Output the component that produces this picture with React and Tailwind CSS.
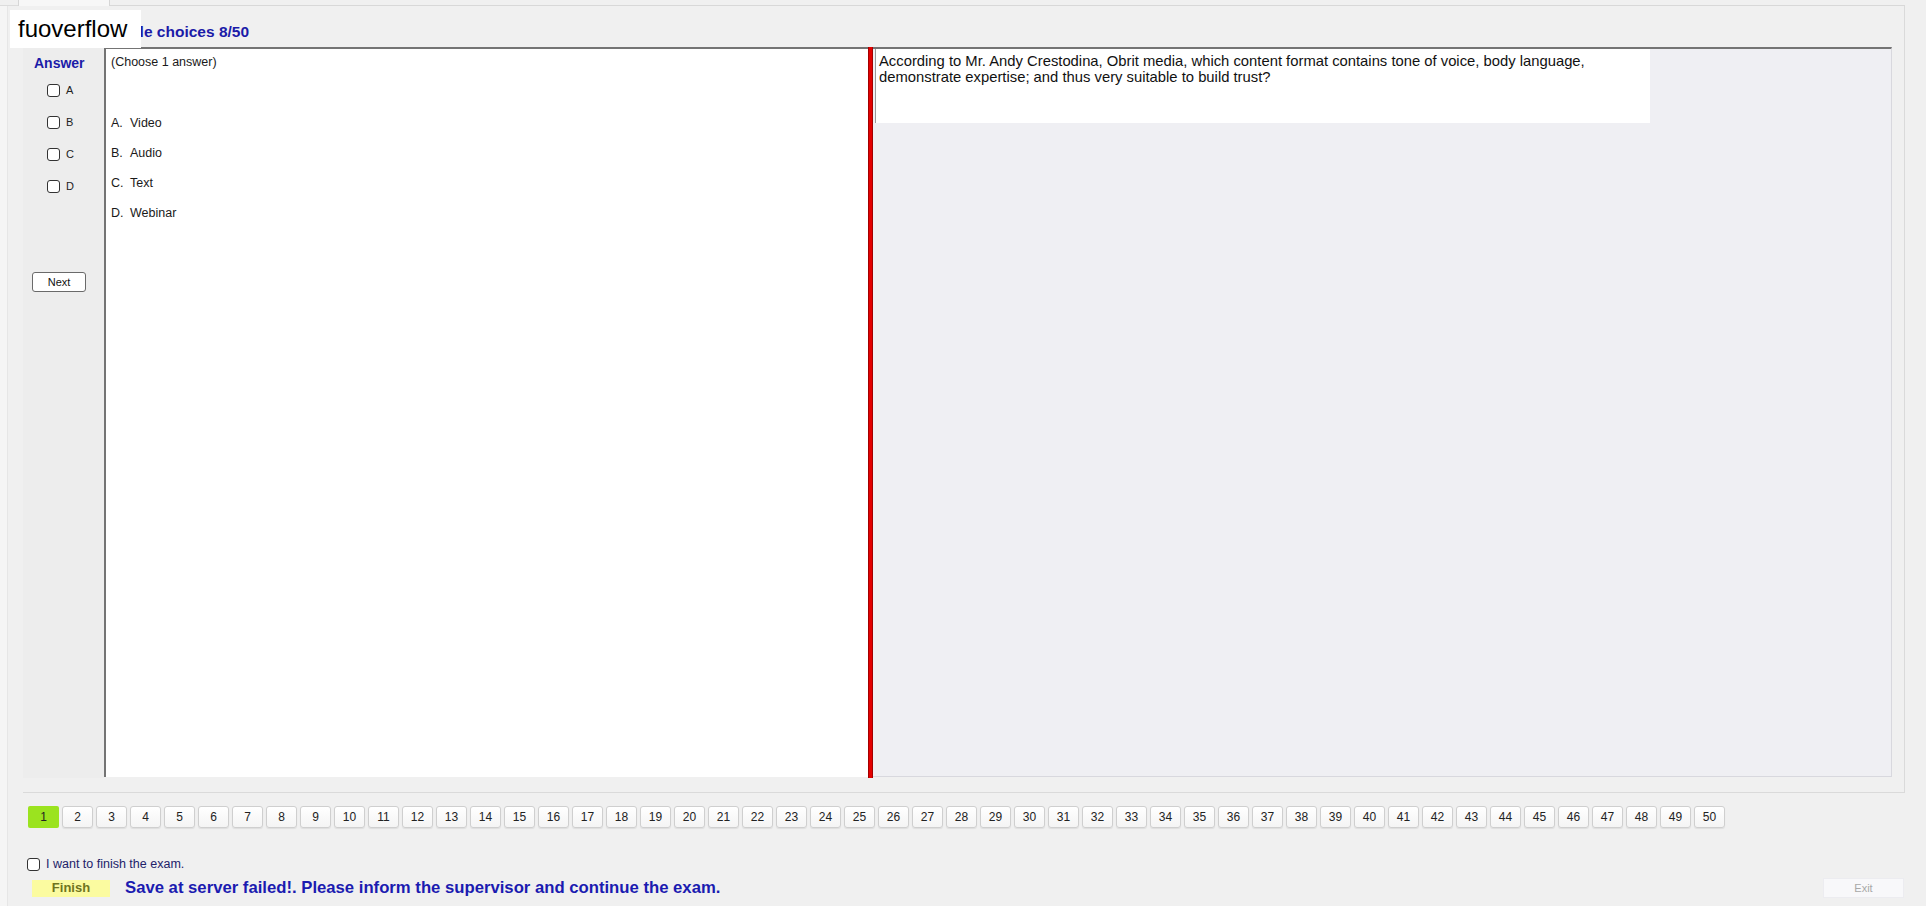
import React from 'react';

const options = [
  { key: 'A', text: 'Video' },
  { key: 'B', text: 'Audio' },
  { key: 'C', text: 'Text' },
  { key: 'D', text: 'Webinar' },
];

const Box = () => (
  <span className="inline-block w-[13px] h-[13px] rounded-[3px] border border-[#333] bg-white shrink-0" />
);

const ExamPage = () => {
  const current = 1;
  const numbers = Array.from({ length: 50 }, (_, i) => i + 1);

  return (
    <div className="relative w-[1926px] h-[906px] overflow-hidden bg-[#f0f0f0] font-['Liberation_Sans',Arial,sans-serif] text-black">
      {/* tab strip */}
      <div className="flex h-[6px]">
        <div className="w-[18px] border-b border-[#dcdcdc]" />
        <div className="w-[92px] bg-[#f7f7f7] border-x border-[#d6d6d6]" />
        <div className="w-[1795px] border-b border-[#d8d8d8]" />
      </div>

      <div className="flex h-[900px]">
        <div className="w-[8px] bg-[#f5f5f5] border-r border-[#e6e6e6]" />
        <div className="w-[15px]" />

        <div className="flex flex-col">
          {/* group box */}
          <div className="w-[1882px] h-[787px] flex flex-col border-r border-b border-[#dadada]">
            {/* title */}
            <div className="h-[41px] flex items-center pl-[71px] pt-[11px]">
              <span className="text-[15.5px] font-bold text-[#1b1ba8]">Multiple choices 8/50</span>
            </div>

            {/* main split */}
            <div className="flex h-[731px]">
              {/* answer column */}
              <div className="w-[81px] bg-[#ededed] flex flex-col">
                <div className="pt-[8px] leading-[16px] text-[14px] font-bold text-[#1b1ba8] pl-[11px]">Answer</div>
                <div className="mt-[3px] flex flex-col">
                  {options.map((o) => (
                    <div key={o.key} className="h-[32px] flex items-center pl-[24px] gap-[6px]">
                      <Box />
                      <span className="text-[11px] text-[#222]">{o.key}</span>
                    </div>
                  ))}
                </div>
                <button className="mt-[70px] ml-[9px] w-[54px] h-[20px] rounded-[3px] border border-[#6a6a6a] bg-white text-[11px] text-[#111]">
                  Next
                </button>
              </div>

              {/* answer options pane */}
              <div className="w-[764px] h-[730px] bg-white border-t-2 border-l-2 border-[#747474] pl-[5px] pt-[5px] text-[12.5px] text-[#1a1a1a]">
                <div className="leading-[16px]">(Choose 1 answer)</div>
                <div className="mt-[38px]">
                  {options.map((o) => (
                    <div key={o.key} className="h-[30px] leading-[30px] flex">
                      <span className="w-[19px]">{o.key}.</span>
                      <span>{o.text}</span>
                    </div>
                  ))}
                </div>
              </div>

              {/* splitter */}
              <div className="w-[5px] bg-[#e30000] border-x border-[#a30000]" />

              {/* question pane */}
              <div className="w-[1019px] h-[730px] bg-[#efeff3] border-t-2 border-[#747474] border-r border-b border-r-[#d8d8de] border-b-[#d8d8de] pl-[2px]">
                <div className="w-[775px] h-[74px] bg-white border-l border-[#9a9a9a] pl-[3px] pr-[8px] pt-[4px] text-[14.8px] leading-[16px] text-[#111]">
                  According to Mr. Andy Crestodina, Obrit media, which content format contains tone of voice, body language, demonstrate expertise; and thus very suitable to build trust?
                </div>
              </div>
            </div>
          </div>

          {/* question numbers */}
          <div className="mt-[13px] ml-[5px] flex gap-[3px]">
            {numbers.map((n) => (
              <button
                key={n}
                className={
                  n === current
                    ? 'w-[31px] h-[22px] rounded-[2px] bg-[#9be31f] text-[12px] text-[#222]'
                    : 'w-[31px] h-[22px] rounded-[3px] border border-[#cfcfcf] bg-gradient-to-b from-white to-[#f4f4f4] shadow-[0_1px_1px_rgba(0,0,0,0.08)] text-[12px] text-[#222]'
                }
              >
                {n}
              </button>
            ))}
          </div>

          {/* finish confirm */}
          <div className="mt-[30px] ml-[4px] flex items-center gap-[6px] h-[13px]">
            <Box />
            <span className="text-[12.5px] text-[#22226a]">I want to finish the exam.</span>
          </div>

          {/* bottom bar */}
          <div className="mt-[7px] flex items-center h-[20px]">
            <div className="ml-[9px] w-[78px] h-[17px] bg-[#fbfba0] flex items-center justify-center text-[13px] font-bold text-[#6f7420]">
              Finish
            </div>
            <div className="ml-[15px] text-[16.7px] font-bold text-[#1b1bb0] leading-[20px]">
              Save at server failed!. Please inform the supervisor and continue the exam.
            </div>
            <div className="ml-auto mr-[1px] w-[81px] h-[20px] bg-[#f8f8fa] border border-[#ececf0] flex items-center justify-center text-[11px] text-[#a8a8a8]">
              Exit
            </div>
          </div>
        </div>
      </div>

      {/* watermark */}
      <div className="absolute left-[10px] top-[10px] w-[131px] h-[38px] bg-white pl-[8px] text-[24px] leading-[38px] text-black">
        fuoverflow
      </div>
    </div>
  );
};

export default function App() {
  return <ExamPage />;
}
